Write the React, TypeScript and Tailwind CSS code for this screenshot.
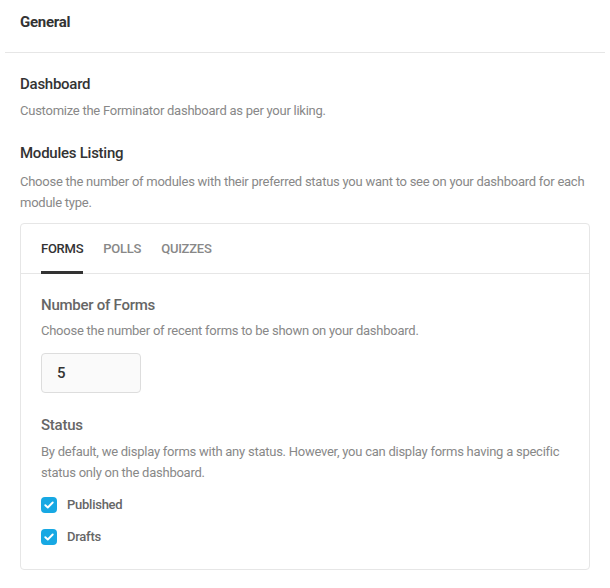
import React from "react";

function Check() {
  return (
    <span className="flex h-4 w-4 items-center justify-center rounded-[4px] bg-[#17a8e3]">
      <svg width="10" height="8" viewBox="0 0 10 8" fill="none">
        <path d="M1.3 4.2 L3.8 6.5 L8.7 1.5" stroke="white" strokeWidth="1.9" strokeLinecap="round" strokeLinejoin="round" />
      </svg>
    </span>
  );
}

export default function App() {
  return (
    <div className="min-h-[588px] w-[610px] bg-white px-[5px] font-['Roboto',sans-serif] tracking-[-0.25px] antialiased">
      <div className="border-b border-[#e6e6e6] px-[15px] pt-[11px] pb-[19px]">
        <h2 className="text-[15px] font-bold leading-[22px] text-[#333]">General</h2>
      </div>
      <div className="px-[15px] pt-[20px]">
        <h3 className="text-[15px] font-medium leading-[22px] text-[#333]">Dashboard</h3>
        <p className="mt-[5px] text-[13px] leading-[22px] text-[#888]">
          Customize the Forminator dashboard as per your liking.
        </p>
        <h3 className="mt-[20px] text-[15px] font-medium leading-[22px] text-[#333]">Modules Listing</h3>
        <p className="mt-[7px] text-[13px] leading-[21px] text-[#888]">
          Choose the number of modules with their preferred status you want to see on your dashboard for each module type.
        </p>
        <div className="mt-[10px] rounded-[4px] border border-[#e6e6e6]">
          <div className="flex gap-[20px] border-b border-[#e6e6e6] px-[20px]">
            <div className="-mb-px border-b-[3px] border-[#333] pt-[14px] pb-[11px] text-[13px] font-medium uppercase leading-[22px] text-[#333]">
              Forms
            </div>
            <div className="-mb-px border-b-[3px] border-transparent pt-[14px] pb-[11px] text-[13px] font-medium uppercase leading-[22px] text-[#888]">
              Polls
            </div>
            <div className="-mb-px border-b-[3px] border-transparent pt-[14px] pb-[11px] text-[13px] font-medium uppercase leading-[22px] text-[#888]">
              Quizzes
            </div>
          </div>
          <div className="px-[20px] pt-[20px] pb-[21px]">
            <h4 className="text-[15px] font-medium leading-[22px] text-[#666]">Number of Forms</h4>
            <p className="mt-[4px] text-[13px] leading-[22px] text-[#888]">
              Choose the number of recent forms to be shown on your dashboard.
            </p>
            <div className="mt-[11px] flex h-[40px] w-[100px] items-center rounded-[4px] border border-[#ddd] bg-[#fafafa] px-[15px] text-[15px] font-medium text-[#333]">
              5
            </div>
            <h4 className="mt-[21px] text-[15px] font-medium leading-[22px] text-[#666]">Status</h4>
            <p className="mt-[5px] text-[13px] leading-[21px] text-[#888]">
              By default, we display forms with any status. However, you can display forms having a specific status only on the dashboard.
            </p>
            <div className="mt-[11px] flex h-[22px] items-center gap-[10px]">
              <Check />
              <span className="text-[13px] font-medium leading-[22px] text-[#666]">Published</span>
            </div>
            <div className="mt-[10px] flex h-[22px] items-center gap-[10px]">
              <Check />
              <span className="text-[13px] font-medium leading-[22px] text-[#666]">Drafts</span>
            </div>
          </div>
        </div>
      </div>
    </div>
  );
}
